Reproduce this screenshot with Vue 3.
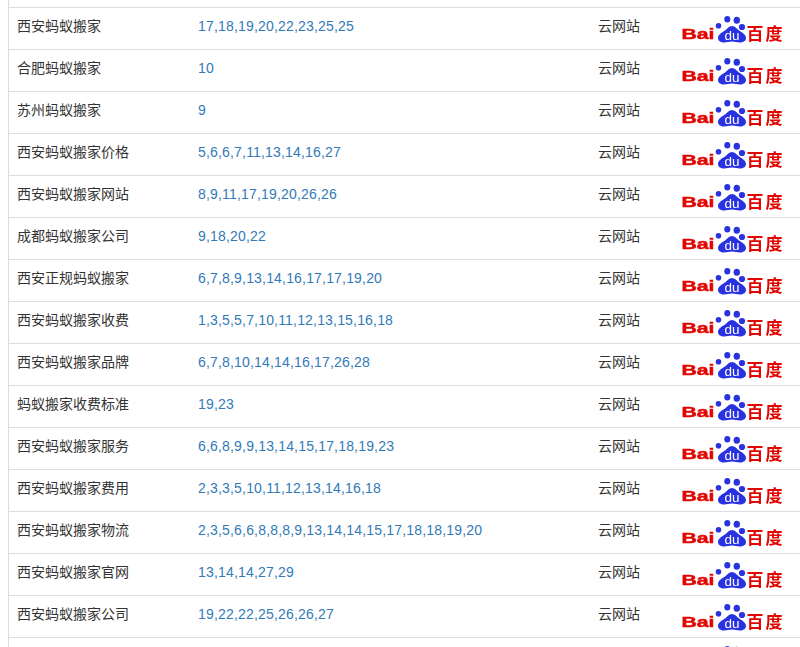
<script setup>
const rows = [
  ['西安蚂蚁搬家', '17,18,19,20,22,23,25,25'],
  ['合肥蚂蚁搬家', '10'],
  ['苏州蚂蚁搬家', '9'],
  ['西安蚂蚁搬家价格', '5,6,6,7,11,13,14,16,27'],
  ['西安蚂蚁搬家网站', '8,9,11,17,19,20,26,26'],
  ['成都蚂蚁搬家公司', '9,18,20,22'],
  ['西安正规蚂蚁搬家', '6,7,8,9,13,14,16,17,17,19,20'],
  ['西安蚂蚁搬家收费', '1,3,5,5,7,10,11,12,13,15,16,18'],
  ['西安蚂蚁搬家品牌', '6,7,8,10,14,14,16,17,26,28'],
  ['蚂蚁搬家收费标准', '19,23'],
  ['西安蚂蚁搬家服务', '6,6,8,9,9,13,14,15,17,18,19,23'],
  ['西安蚂蚁搬家费用', '2,3,3,5,10,11,12,13,14,16,18'],
  ['西安蚂蚁搬家物流', '2,3,5,6,6,8,8,8,9,13,14,14,15,17,18,18,19,20'],
  ['西安蚂蚁搬家官网', '13,14,14,27,29'],
  ['西安蚂蚁搬家公司', '19,22,22,25,26,26,27'],
  ['', ''],
]
</script>

<template>
  <div class="page">
    <div class="table">
      <div v-for="(row, i) in rows" :key="i" class="row">
        <span class="keyword">{{ row[0] }}</span>
        <a class="ranks">{{ row[1] }}</a>
        <span class="source">{{ row[0] ? '云网站' : '' }}</span>
        <svg class="logo" viewBox="0 0 102 28" width="102" height="28">
          <text v-if="row[0]" x="0.500" y="24" class="bai" textLength="33" lengthAdjust="spacingAndGlyphs">Bai</text>
          <circle cx="37.500" cy="10.700" r="2.800" class="paw" />
          <ellipse cx="46.300" cy="4.300" rx="3" ry="3.300" class="paw" />
          <ellipse cx="55.800" cy="5.200" rx="3.200" ry="3.500" class="paw" />
          <circle cx="61" cy="12" r="3.100" class="paw" />
          <path class="paw" d="M51 11c3 0 4.500 2.500 7 4.500 3 2 7 4 7 7.500 0 3-3 4.500-6 4.500-3 0-5-1-8-1s-5 1-8 1c-3 0-6-1.500-6-4.500 0-3.500 4-5.500 7-7.500 2.500-2 4-4.500 7-4.500z" />
          <text v-if="row[0]" x="51" y="24.500" class="du" textLength="15" lengthAdjust="spacingAndGlyphs" text-anchor="middle">du</text>
          <text v-if="row[0]" x="65.500" y="25" class="baidu" textLength="36">百度</text>
        </svg>
      </div>
    </div>
  </div>
</template>

<style scoped>
.page {
  padding-left: 8px;
  font-family: "Liberation Sans", "Noto Sans CJK SC", sans-serif;
  font-size: 14px;
  color: #333;
}
.table {
  padding-top: 7px;
  border-left: 1px solid #ddd;
}
.row {
  display: grid;
  grid-template-columns: 181px 400px 83px 1fr;
  height: 42px;
  box-sizing: border-box;
  padding-left: 8px;
  border-top: 1px solid #ddd;
}
.keyword,
.ranks,
.source {
  line-height: 20px;
  padding-top: 8px;
}
.ranks {
  color: #337ab7;
  letter-spacing: 0.18px;
}
.logo {
  display: block;
  margin-top: 7px;
  overflow: visible;
  filter: blur(0.3px);
}
.bai {
  font-family: "Liberation Sans", sans-serif;
  font-weight: 700;
  font-size: 15.500px;
  fill: #e10601;
  stroke: #e10601;
  stroke-width: 0.5px;
}
.paw {
  fill: #2932e1;
}
.du {
  font-family: "Liberation Sans", sans-serif;
  font-size: 12px;
  fill: #fff;
}
.baidu {
  font-family: "Noto Sans CJK SC", sans-serif;
  font-weight: 700;
  font-size: 17px;
  fill: #e10601;
}
</style>

<style>
html,
body {
  margin: 0;
  height: 647px;
  overflow: hidden;
  background: #fff;
}
</style>
